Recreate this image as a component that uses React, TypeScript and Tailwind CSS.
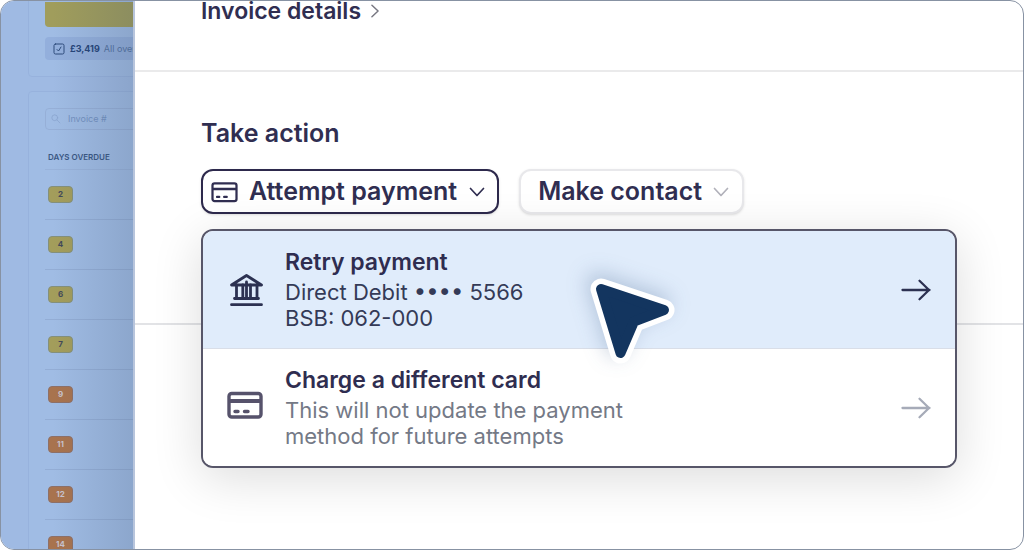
import type { ReactNode } from "react";

type Overdue = { days: number; severe: boolean };

const overdueRows: Overdue[] = [
  { days: 2, severe: false },
  { days: 4, severe: false },
  { days: 6, severe: false },
  { days: 7, severe: false },
  { days: 9, severe: true },
  { days: 11, severe: true },
  { days: 12, severe: true },
  { days: 14, severe: true },
];

function Chevron({ className }: { className: string }) {
  return (
    <svg viewBox="0 0 16 16" className={className} fill="none" stroke="currentColor" strokeWidth="1.7" strokeLinecap="round" strokeLinejoin="round" aria-hidden="true">
      <path d="M1.500 4.500 8 11.500 14.500 4.500" />
    </svg>
  );
}

function CardIcon({ className, weight }: { className: string; weight: number }) {
  return (
    <svg viewBox="0 0 36 28" className={className} fill="none" stroke="currentColor" strokeWidth={weight} strokeLinecap="round" aria-hidden="true">
      <rect x="2" y="2.500" width="32" height="23.500" rx="2.800" />
      <path d="M2 10h32" strokeLinecap="butt" strokeWidth={weight + 0.6} />
      <path d="M8 20.500h3M17.500 20.500h3.500" />
    </svg>
  );
}

function BankIcon() {
  return (
    <svg viewBox="0 0 36 34" className="h-[34px] w-9 shrink-0" fill="none" stroke="currentColor" strokeWidth="2.800" strokeLinecap="round" strokeLinejoin="round" aria-hidden="true">
      <path d="M19.500 2.500 34.500 12H4.500Z" />
      <path d="M9.500 12v12M15.800 12v12M19.500 9v15M23.500 12v12M30 12v12" />
      <path d="M7.500 25.500h24M4.500 31.700h30" />
    </svg>
  );
}

function Arrow({ className }: { className: string }) {
  return (
    <svg viewBox="0 0 30 22" className={className} fill="none" stroke="currentColor" strokeWidth="2.300" strokeLinecap="round" strokeLinejoin="round" aria-hidden="true">
      <path d="M1.500 11h27M18.500 1.700 28 11 18.500 20.300" />
    </svg>
  );
}

function Pointer() {
  const shape = "M13 11 76 32 46 43.500 32.500 75Z";
  return (
    <svg viewBox="0 0 92 92" className="pointer-events-none absolute top-16 left-[387px] size-[92px] overflow-visible drop-shadow-[-4px_-6px_10px_rgba(40,75,125,0.25)]" strokeLinejoin="round" aria-hidden="true">
      <path d={shape} fill="#fff" stroke="#fff" strokeWidth="21" />
      <path d={shape} fill="#13355f" stroke="#13355f" strokeWidth="10" />
    </svg>
  );
}

function Sidebar() {
  return (
    <aside className="relative w-[134px] shrink-0 overflow-hidden border-r-2 border-[#b8c5dc] bg-[#9fbae3] text-[#3a5783]">
      <div className="-mt-2 ml-[27px] w-80 rounded border border-[#97b2dd] bg-[#a0bce4] pt-2 pb-4 pl-4">
        <div className="h-[25px] rounded-b bg-[#a09d5c]" />
        <label className="mt-[10px] flex h-[23px] items-center rounded bg-[#93afdc] pl-2 text-[9px]">
          <input type="checkbox" defaultChecked className="peer sr-only" />
          <svg viewBox="0 0 12 12" className="size-3 shrink-0 text-[#2c4a7a]" fill="none" stroke="currentColor" strokeLinecap="round" strokeLinejoin="round" aria-hidden="true">
            <rect x="1" y="1" width="10" height="10" rx="1.500" />
            <path d="M4 6.500 5.500 8 8 4" />
          </svg>
          <span className="ml-[5px] font-bold text-[#254478]">£3,419</span>
          <span className="ml-1 whitespace-nowrap text-[#5472a1]">All overdue</span>
        </label>
      </div>
      <div className="mt-[14px] ml-[27px] w-80 rounded-t border border-[#97b2dd] bg-[#a0bce4] pt-4 pl-4">
        <label className="flex h-[22px] items-center rounded border border-[#96afd7] pl-[5px]">
          <svg viewBox="0 0 12 12" className="size-[10px] shrink-0 text-[#8ba6d0]" fill="none" stroke="currentColor" strokeLinecap="round" aria-hidden="true">
            <circle cx="4.500" cy="4.500" r="3.500" />
            <path d="m7.200 7.200 3.500 3.500" />
          </svg>
          <input type="text" aria-label="Invoice number" placeholder="Invoice #" className="ml-[7px] w-24 bg-transparent text-[9px] outline-none placeholder:text-[#7391c0]" />
        </label>
        <table className="mt-[18px] w-full">
          <thead>
            <tr>
              <th className="h-[21px] border-b border-[#98b2da] pt-0 pb-[3px] pl-[3px] text-left text-[8px] leading-4 font-semibold">DAYS OVERDUE</th>
            </tr>
          </thead>
          <tbody>
            {overdueRows.map((row) => (
              <tr key={row.days}>
                <td className="h-[50px] border-b border-[#93add5] py-0 pl-[3px]">
                  <span
                    className={
                      row.severe
                        ? "flex h-[17px] w-[25px] items-center justify-center rounded border border-[#8e7067] bg-[#a8734e] text-[8px] font-bold text-[#c9c4cf]"
                        : "flex h-[17px] w-[25px] items-center justify-center rounded border border-[#84907c] bg-[#a39d5b] text-[8px] font-bold text-[#424858]"
                    }
                  >
                    {row.days}
                  </span>
                </td>
              </tr>
            ))}
          </tbody>
        </table>
      </div>
      <div className="pointer-events-none absolute inset-y-0 right-0 w-20 bg-linear-to-r from-transparent to-[#3c506e]/20" />
    </aside>
  );
}

type OptionProps = { icon: ReactNode; title: string; lines: [string, string]; active?: boolean };

function Option({ icon, title, lines, active = false }: OptionProps) {
  return (
    <button
      type="button"
      role="menuitem"
      className={
        active
          ? "flex h-[118px] w-full items-center border-b border-[#d9dee8] bg-[#e0ecfb] px-6 text-left text-[#2c3151]"
          : "flex h-[117px] w-full items-center bg-white px-6 text-left text-[#56526b]"
      }
    >
      {icon}
      <span className="ml-[22px] flex-1 pb-[3px]">
        <span className="block text-[23px] leading-[34px] font-semibold text-[#2f2d50]">{title}</span>
        <span className={active ? "block text-[22px] leading-[26px] text-[#343a57]" : "block text-[22px] leading-[26px] text-[#747986]"}>
          {lines[0]}
          <br />
          {lines[1]}
        </span>
      </span>
      <Arrow className={active ? "h-[22px] w-[30px] shrink-0" : "h-[22px] w-[30px] shrink-0 text-[#a6abb8]"} />
    </button>
  );
}

export default function App() {
  return (
    <div className="flex h-screen overflow-hidden rounded-[14px] border border-[#8792a3] bg-white font-[Inter,'Liberation_Sans',sans-serif] text-[#302e51]">
      <Sidebar />
      <main className="min-w-0 flex-1">
        <section className="flex h-[71px] items-start border-b-2 border-[#eaeaeb] px-[66px]">
          <a href="#invoice" className="-mt-1 flex items-center gap-[7px] text-[23px] leading-7 font-semibold">
            Invoice details
            <Chevron className="size-[14px] -rotate-90 text-[#777781]" />
          </a>
        </section>
        <section className="h-[253px] border-b-2 border-[#e2e3e6] px-[66px] pt-[45px]">
          <h2 className="text-[25px] leading-8 font-semibold">Take action</h2>
          <div className="mt-5 flex gap-5">
            <button type="button" aria-expanded="true" className="flex h-[45px] items-center rounded-xl border-2 border-[#2d294c] bg-white pr-3 pl-2 text-[25px] font-semibold shadow-sm">
              <CardIcon className="h-[22px] w-[27px]" weight={3} />
              <span className="ml-[11px]">Attempt payment</span>
              <Chevron className="ml-3 size-4" />
            </button>
            <button type="button" className="flex h-[45px] items-center rounded-xl border-2 border-[#e8e8eb] bg-white pr-[13px] pl-[17px] text-[25px] font-semibold shadow-sm">
              Make contact
              <Chevron className="ml-[11px] size-4 text-[#b1b1ba]" />
            </button>
          </div>
          <div className="relative">
            <div role="menu" className="absolute inset-x-0 top-[15px] overflow-hidden rounded-xl border-2 border-[#575669] bg-white shadow-[0_10px_50px_rgba(0,0,0,0.14)]">
              <Option active icon={<BankIcon />} title="Retry payment" lines={["Direct Debit •••• 5566", "BSB: 062-000"]} />
              <Option icon={<CardIcon className="mb-[6px] h-7 w-9 shrink-0" weight={3.4} />} title="Charge a different card" lines={["This will not update the payment", "method for future attempts"]} />
            </div>
            <Pointer />
          </div>
        </section>
      </main>
    </div>
  );
}
